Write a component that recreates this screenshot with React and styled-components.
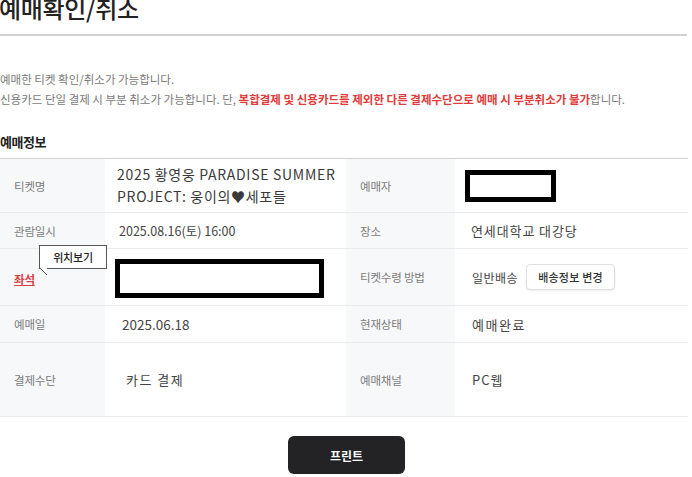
import React from 'react';
import styled, { createGlobalStyle } from 'styled-components';

const GlobalStyle = createGlobalStyle`
  html, body {
    margin: 0;
    padding: 0;
    background: #fff;
    overflow: hidden;
  }
  body {
    font-family: "Noto Sans CJK KR", "Noto Sans", sans-serif;
    color: #333;
  }
`;

const Page = styled.div`
  width: 692px;
  height: 477px;
  overflow: hidden;
`;

const Title = styled.h1`
  margin: -9px 0 0 -1px;
  font-size: 24px;
  font-weight: 500;
  line-height: 34px;
  color: #222;
  letter-spacing: -0.3px;
`;

const Divider = styled.div`
  width: 687px;
  height: 2px;
  background: #d2d2d2;
  margin-top: 9px;
`;

const Notice = styled.div`
  margin-top: 33px;
  font-size: 11.5px;
  line-height: 20px;
  color: #7a7a7a;
  letter-spacing: 0;
`;

const Strong = styled.b`
  color: #e23b3b;
  font-weight: 700;
`;

const SectionTitle = styled.h2`
  margin: 24px 0 0;
  font-size: 13px;
  font-weight: 700;
  line-height: 18px;
  color: #222;
  letter-spacing: -0.5px;
`;

const Table = styled.div`
  margin-top: 7px;
  width: 688px;
  border-top: 1px solid #cfcfcf;
`;

const Row = styled.div`
  display: grid;
  grid-template-columns: 105px 241px 109px 233px;
  height: ${(p) => p.$h}px;
  border-bottom: 1px solid #ebebeb;
`;

const Label = styled.div`
  position: relative;
  display: flex;
  align-items: center;
  padding-left: 14px;
  background: #f7f8fa;
  font-size: 11.5px;
  color: #7b7b7b;
  letter-spacing: -0.2px;
`;

const Value = styled.div`
  display: flex;
  align-items: center;
  padding-left: ${(p) => p.$pl ?? 12}px;
  font-size: ${(p) => p.$fs ?? 12}px;
  color: #444;
  letter-spacing: ${(p) => p.$ls ?? 0}px;
`;

const TicketName = styled.div`
  font-size: 14px;
  line-height: 22px;
  color: #3a3a3a;
  letter-spacing: 0.7px;
  margin-top: -2px;
`;

const SeatLink = styled.span`
  color: #d94343;
  font-weight: 700;
  text-decoration: underline;
  margin-top: 4px;
`;

const Tooltip = styled.div`
  position: absolute;
  left: 39px;
  top: -4px;
  width: 66px;
  height: 22px;
  border: 1px solid #555;
  background: #fff;
  color: #222;
  font-size: 11px;
  font-weight: 500;
  display: flex;
  align-items: center;
  justify-content: center;
  &::after {
    content: '';
    position: absolute;
    left: -1px;
    bottom: -7px;
    width: 8px;
    height: 8px;
    background: linear-gradient(to top right, transparent 45%, #555 45%, #555 55%, #fff 55%);
  }
`;

const Redacted = styled.div`
  width: ${(p) => p.$w}px;
  height: ${(p) => p.$h}px;
  margin-top: ${(p) => p.$mt ?? 0}px;
  border: 5px solid #000;
  background: #fff;
  box-sizing: border-box;
`;

const SmallButton = styled.button`
  margin-left: 8px;
  height: 26px;
  padding: 0 11px;
  border: 1px solid #e0e0e0;
  border-radius: 4px;
  background: #fff;
  box-shadow: 0 1px 2px rgba(0, 0, 0, 0.08);
  font-family: inherit;
  font-size: 11px;
  font-weight: 500;
  color: #333;
  letter-spacing: 0.2px;
`;

const Footer = styled.div`
  display: flex;
  justify-content: center;
  padding-top: 19px;
  padding-left: 1px;
`;

const PrintButton = styled.button`
  width: 117px;
  height: 38px;
  border: none;
  border-radius: 6px;
  background: #232325;
  color: #fff;
  font-family: inherit;
  font-size: 12px;
  font-weight: 700;
`;

export default function App() {
  return (
    <Page>
      <GlobalStyle />
      <Title>예매확인/취소</Title>
      <Divider />
      <Notice>
        예매한 티켓 확인/취소가 가능합니다.
        <br />
        신용카드 단일 결제 시 부분 취소가 가능합니다. 단,{' '}
        <Strong>복합결제 및 신용카드를 제외한 다른 결제수단으로 예매 시 부분취소가 불가</Strong>
        합니다.
      </Notice>
      <SectionTitle>예매정보</SectionTitle>
      <Table>
        <Row $h={53}>
          <Label>티켓명</Label>
          <Value>
            <TicketName>
              2025 황영웅 PARADISE SUMMER
              <br />
              PROJECT: 웅이의♥세포들
            </TicketName>
          </Value>
          <Label>예매자</Label>
          <Value $pl={10}>
            <Redacted $w={91} $h={32} />
          </Value>
        </Row>
        <Row $h={35}>
          <Label>관람일시</Label>
          <Value $fs={12.5} $pl={14}>2025.08.16(토) 16:00</Value>
          <Label>장소</Label>
          <Value $fs={13} $pl={16} $ls={0.9}>연세대학교 대강당</Value>
        </Row>
        <Row $h={56}>
          <Label>
            <SeatLink>좌석</SeatLink>
            <Tooltip>위치보기</Tooltip>
          </Label>
          <Value $pl={10}>
            <Redacted $w={209} $h={39} $mt={2} />
          </Value>
          <Label>티켓수령 방법</Label>
          <Value $fs={12} $pl={17} $ls={0.5}>
            일반배송
            <SmallButton>배송정보 변경</SmallButton>
          </Value>
        </Row>
        <Row $h={36}>
          <Label>예매일</Label>
          <Value $fs={13.5} $pl={17}>2025.06.18</Value>
          <Label>현재상태</Label>
          <Value $fs={13} $pl={17} $ls={1.5}>예매완료</Value>
        </Row>
        <Row $h={73}>
          <Label>결제수단</Label>
          <Value $fs={13} $pl={21} $ls={1.5}>카드 결제</Value>
          <Label>예매채널</Label>
          <Value $fs={13} $pl={17} $ls={1}>PC웹</Value>
        </Row>
      </Table>
      <Footer>
        <PrintButton>프린트</PrintButton>
      </Footer>
    </Page>
  );
}
